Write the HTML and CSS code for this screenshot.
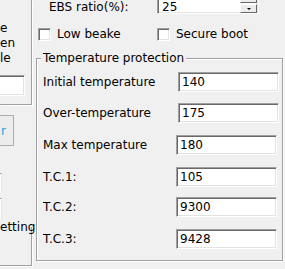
FILE: index.html
```html
<!DOCTYPE html>
<html>
<head>
<meta charset="utf-8">
<link rel="stylesheet" href="styles.css">
</head>
<body>
<div class="screen">
  <div class="left">
    <div class="lgroup">
      <div class="frag">e</div>
      <div class="frag">en</div>
      <div class="frag">le</div>
      <div class="ledit"></div>
    </div>
    <div class="lbutton"><span class="lbtn-text">r</span></div>
    <div class="ledge ledge-1"></div>
    <div class="ledge ledge-2"></div>
    <div class="lgroup2">
      <span class="lgroup2-title">etting</span>
    </div>
  </div>
  <div class="right">
    <div class="toprow">
      <span class="ebs-label">EBS ratio(%):</span>
      <div class="spin">
        <span class="spin-value">25</span>
        <div class="spin-buttons">
          <div class="spin-btn spin-up"><span class="arrow-up"></span></div>
          <div class="spin-btn spin-down"><span class="arrow-down"></span></div>
        </div>
      </div>
    </div>
    <div class="checkrow">
      <label class="check check-low"><span class="box"></span><span class="check-text">Low beake</span></label>
      <label class="check check-secure"><span class="box"></span><span class="check-text">Secure boot</span></label>
    </div>
    <div class="group">
      <div class="group-title">Temperature protection</div>
      <div class="rows">
        <div class="label">Initial temperature</div><div class="edit edit-shift">140</div>
        <div class="label">Over-temperature</div><div class="edit edit-shift">175</div>
        <div class="label">Max temperature</div><div class="edit">180</div>
        <div class="label">T.C.1:</div><div class="edit">105</div>
        <div class="label">T.C.2:</div><div class="edit">9300</div>
        <div class="label">T.C.3:</div><div class="edit">9428</div>
      </div>
    </div>
  </div>
</div>
</body>
</html>
```
FILE: styles.css
```css
html, body {
  margin: 0;
  padding: 0;
  background: #f0f0f0;
}
body {
  font-family: "DejaVu Sans", "Liberation Sans", sans-serif;
  font-size: 12px;
  color: #000;
}
.screen {
  width: 285px;
  height: 269px;
  overflow: hidden;
  display: flex;
  align-items: flex-start;
}
.left {
  width: 32px;
  flex: none;
  display: flex;
  flex-direction: column;
}
.lgroup {
  box-sizing: border-box;
  height: 105px;
  width: 32px;
  border-right: 1px solid #a0a0a0;
  border-bottom: 1px solid #a0a0a0;
  box-shadow: 1px 1px 0 #fff;
  padding-top: 21px;
}
.frag {
  line-height: 15px;
  height: 15px;
  color: #000;
}
.ledit {
  margin-top: 9px;
  box-sizing: border-box;
  width: 25px;
  height: 21px;
  background: #fff;
  border-right: 1px solid #fff;
  border-bottom: 1px solid #fff;
  border-top: 1px solid #a0a0a0;
  box-shadow: inset 0 1px 0 #696969, inset -1px -1px 0 #e3e3e3;
}
.lbutton {
  margin-top: 10px;
  box-sizing: border-box;
  width: 14px;
  height: 31px;
  border: 1px solid #adadad;
  border-left: none;
  background: #ececec;
  display: flex;
  align-items: center;
}
.lbtn-text {
  color: #2aa2d8;
  padding-left: 1px;
}
.ledge {
  box-sizing: border-box;
  width: 2px;
  height: 20px;
  background: #fff;
  border-right: 1px solid #e3e3e3;
  border-top: 1px solid #a0a0a0;
}
.ledge-1 { margin-top: 27px; }
.ledge-2 { margin-top: 5px; }
.lgroup2 {
  margin-top: 9px;
  box-sizing: border-box;
  width: 32px;
  height: 39px;
  border-right: 1px solid #a0a0a0;
  border-bottom: 1px solid #a0a0a0;
  box-shadow: 1px 1px 0 #fff;
}
.lgroup2-title {
  display: block;
  width: 28px;
  margin-top: -7px;
  line-height: 14px;
  background: #f0f0f0;
  color: #000;
}

.right {
  margin-left: 4px;
  width: 247px;
  flex: none;
  display: flex;
  flex-direction: column;
}
.toprow {
  height: 14px;
  display: flex;
  align-items: flex-start;
}
.ebs-label {
  margin-left: 13px;
  width: 108px;
  line-height: 14px;
}
.spin {
  margin-top: -8px;
  box-sizing: border-box;
  width: 102px;
  height: 22px;
  background: #fff;
  border: 1px solid;
  border-color: #a0a0a0 #fff #fff #a0a0a0;
  box-shadow: inset 1px 1px 0 #696969, inset -1px -1px 0 #e3e3e3;
  display: flex;
  align-items: flex-start;
}
.spin-value {
  flex: 1;
  padding-left: 4px;
  margin-top: 7px;
  line-height: 14px;
}
.spin-buttons {
  width: 17px;
  height: 19px;
  margin: 1px 1px 1px 0;
  display: flex;
  flex-direction: column;
  gap: 1px;
}
.spin-btn {
  flex: 1;
  box-sizing: border-box;
  background: #ececec;
  border: 1px solid;
  border-color: #fff #696969 #696969 #fff;
  display: flex;
  align-items: center;
  justify-content: center;
}
.arrow-up, .arrow-down {
  width: 0;
  height: 0;
  border-left: 2px solid transparent;
  border-right: 2px solid transparent;
}
.arrow-up { border-bottom: 2px solid #000; }
.arrow-down { border-top: 2px solid #000; }

.checkrow {
  margin-top: 13px;
  height: 14px;
  display: flex;
}
.check {
  display: flex;
  align-items: center;
  height: 14px;
}
.check-low { margin-left: 2px; width: 119px; }
.box {
  box-sizing: border-box;
  width: 13px;
  height: 13px;
  background: #fff;
  border: 1px solid;
  border-color: #a0a0a0 #fff #fff #a0a0a0;
  box-shadow: inset 1px 1px 0 #696969, inset -1px -1px 0 #e3e3e3;
}
.check-text {
  margin-left: 6px;
  line-height: 14px;
}

.group {
  margin-top: 17px;
  box-sizing: border-box;
  width: 247px;
  height: 203px;
  border: 1px solid #a0a0a0;
  box-shadow: inset 1px 1px 0 #fff, 1px 1px 0 #fff;
  padding-left: 6px;
}
.group-title {
  display: block;
  width: max-content;
  margin-top: -8px;
  margin-left: -2px;
  padding: 0 2px;
  line-height: 14px;
  background: #f0f0f0;
}
.rows {
  margin-top: 7px;
  display: grid;
  grid-template-columns: 133px 101px;
  grid-template-rows: 31px 32px 32px 30px 32px 20px;
  align-items: start;
}
.label {
  height: 20px;
  line-height: 20px;
}
.edit {
  box-sizing: border-box;
  width: 101px;
  height: 20px;
  background: #fff;
  border: 1px solid;
  border-color: #a0a0a0 #fff #fff #a0a0a0;
  box-shadow: inset 1px 1px 0 #696969, inset -1px -1px 0 #e3e3e3;
  padding-left: 3px;
  line-height: 18px;
}
.edit-shift {
  margin-left: 2px;
}
```
